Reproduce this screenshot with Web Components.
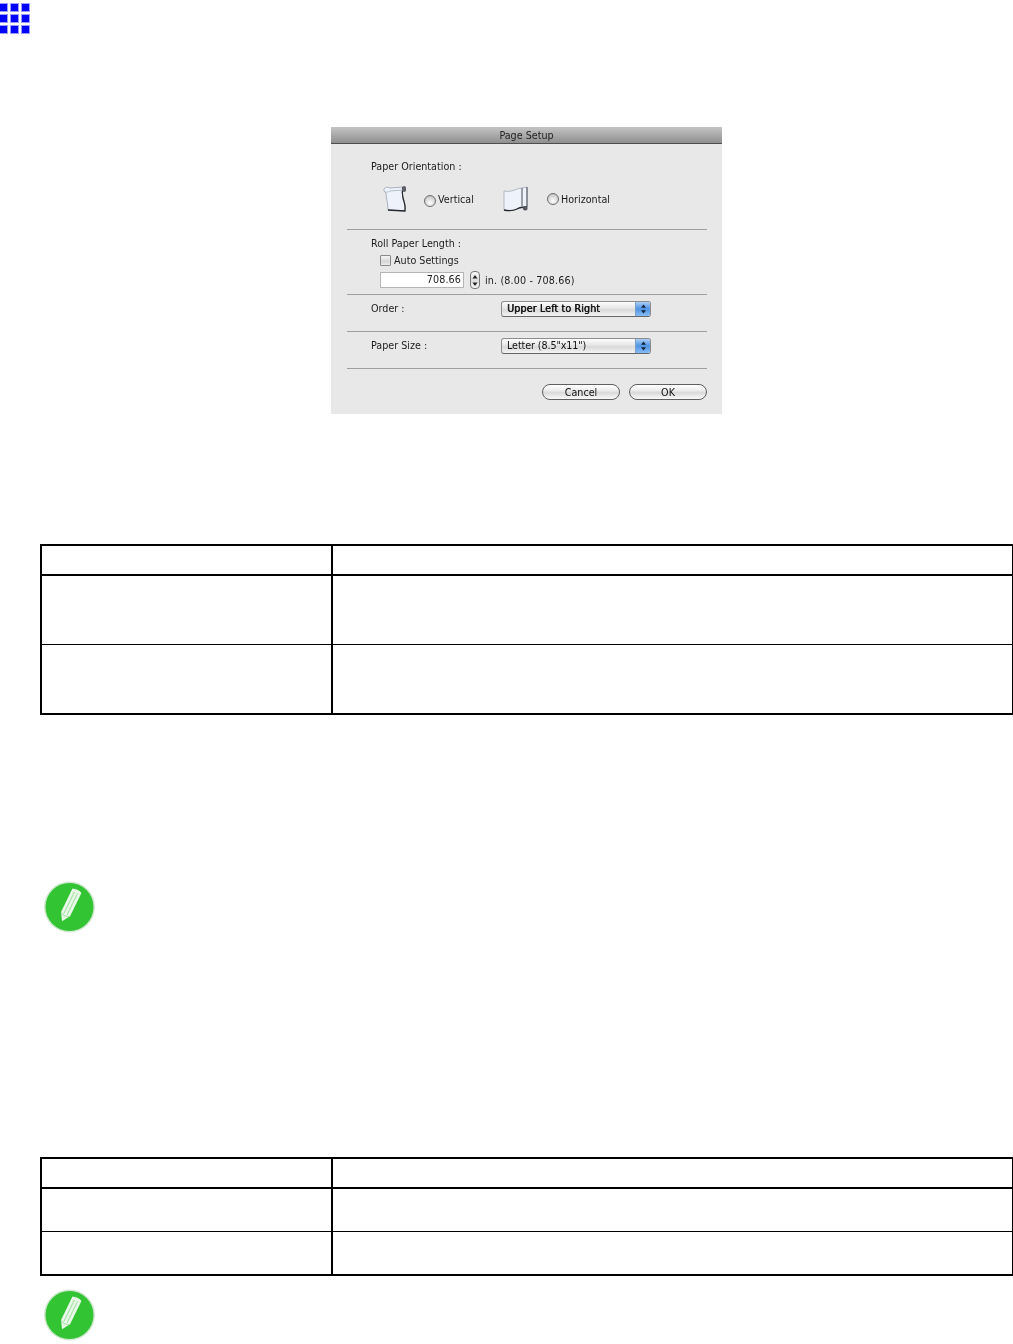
<!DOCTYPE html>
<html>
<head>
<meta charset="utf-8">
<title>Page Setup</title>
<style>
html, body { margin: 0; padding: 0; background: #fff; }
</style>
</head>
<body>
<manual-page>
  <grid-mark></grid-mark>
  <figure-box>
    <page-setup-dialog></page-setup-dialog>
  </figure-box>
  <spec-table rows="69,69" style="margin-top:130px"></spec-table>
  <note-mark style="margin-top:162px"></note-mark>
  <spec-table rows="43,43" style="margin-top:220px"></spec-table>
  <note-mark style="margin-top:9px"></note-mark>
</manual-page>

<script>
function define(name, html, setup) {
  customElements.define(name, class extends HTMLElement {
    constructor() {
      super();
      this.attachShadow({ mode: 'open' });
      this.shadowRoot.innerHTML = html;
    }
    connectedCallback() {
      if (setup) setup(this);
    }
  });
}

define('manual-page', `
<style>
:host { display: block; width: 1013px; height: 1344px; overflow: hidden; font-family: "Liberation Sans", sans-serif; }
</style>
<slot></slot>
`);

define('grid-mark', `
<style>
:host { display: grid; grid-template-columns: repeat(3, 9px); grid-auto-rows: 9px; gap: 2px; width: 31px; height: 31px; padding-top: 3px; margin: 0 0 -1px -1px; }
i { background: #0000ff; border: 1px solid #9a9aff; box-sizing: border-box; }
</style>
<i></i><i></i><i></i><i></i><i></i><i></i><i></i><i></i><i></i>
`);

define('figure-box', `
<style>
:host { display: flex; justify-content: center; padding-left: 40px; margin-top: 94px; }
</style>
<slot></slot>
`);

define('spec-table', `
<style>
:host { display: block; margin-left: 40px; width: 973px; box-sizing: border-box; border: solid #000; border-width: 2px 1px 2px 2px; }
.row { display: grid; grid-template-columns: 291px 1fr; }
.row + .row { border-top: 1px solid #000; }
.row.head { border-bottom: 2px solid #000; height: 28px; }
.row.head + .row { border-top: 0; }
.row > div:first-child { border-right: 2px solid #000; }
</style>
<div id="body"></div>
`, el => {
  const body = el.shadowRoot.getElementById('body');
  body.innerHTML = '<div class="row head"><div></div><div></div></div>';
  el.getAttribute('rows').split(',').forEach(h => {
    body.insertAdjacentHTML('beforeend', `<div class="row" style="height:${h - 1}px"><div></div><div></div></div>`);
  });
});

define('note-mark', `
<style>
:host { display: block; width: 60px; height: 60px; margin-left: 40px; }
svg { display: block; }
</style>
<svg width="60" height="60" viewBox="0 0 60 60">
  <defs>
    <filter id="soft" x="-20%" y="-20%" width="140%" height="140%"><feGaussianBlur stdDeviation="0.7"/></filter>
  </defs>
  <g filter="url(#soft)">
    <circle cx="29.5" cy="30" r="25.5" fill="#cfe8cf"/>
    <circle cx="29.5" cy="30" r="24" fill="#31c431"/>
    <g transform="rotate(26 29.5 29)">
      <path d="M24.5 12 Q29.5 10 34.5 12 L34.5 38 L29.5 46 L24.5 38 Z" fill="#eaf8ea"/>
      <path d="M27.8 14 V38 M31.2 14 V38" stroke="#a6e3a6" stroke-width="1.1"/>
      <path d="M25 38.5 Q29.5 41.5 34 38.5" stroke="#a6e3a6" stroke-width="1" fill="none"/>
    </g>
  </g>
</svg>
`);

define('mac-radio', `
<style>
:host { display: flex; align-items: center; }
i { width: 10px; height: 10px; border-radius: 50%; border: 1px solid #6d6d6d; background: radial-gradient(circle at 50% 70%, #fff, #d8d8d8 55%, #b4b4b4); margin-top: var(--drop, 0); }
span { margin-left: 2px; }
</style>
<i></i><span><slot></slot></span>
`);

define('mac-checkbox', `
<style>
:host { display: flex; align-items: center; }
i { width: 9px; height: 9px; border: 1px solid #8a8a8a; border-radius: 1px; background: linear-gradient(#f6f6f6, #d6d6d6 60%, #ececec); }
span { margin-left: 3px; }
</style>
<i></i><span><slot></slot></span>
`);

define('mac-select', `
<style>
:host { display: flex; width: 150px; height: 16px; box-sizing: border-box; border: 1px solid #8d8d8d; border-bottom-color: #666; border-radius: 3px; overflow: hidden; background: linear-gradient(#fdfdfd, #e6e6e6 45%, #d9d9d9 55%, #f4f4f4); }
span { flex: 1; padding-left: 5px; line-height: 14px; color: #111; letter-spacing: -0.1px; }
b { width: 14px; position: relative; background: linear-gradient(#a9cdf5, #4f94e4 50%, #88bdf4); border-left: 1px solid #7d9fc6; }
svg { display: block; margin: 2px auto 0; }
</style>
<span><slot></slot></span>
<b><svg width="7" height="10" viewBox="0 0 7 10"><path d="M3.5 0.5 L6 3.8 H1 Z M1 6.2 H6 L3.5 9.5 Z" fill="#12233c"/></svg></b>
`);

define('mac-button', `
<style>
:host { display: block; width: 78px; height: 16px; box-sizing: border-box; border: 1px solid #5f5f5f; border-radius: 8px; text-align: center; line-height: 15px; color: #111; background: linear-gradient(#fff, #ececec 40%, #d9d9d9 55%, #fafafa); }
</style>
<slot></slot>
`);

define('page-setup-dialog', `
<style>
:host { display: block; width: 391px; height: 287px; background: #e8e8e8; font: 9.6px "DejaVu Sans", sans-serif; color: #1c1c1c; filter: blur(0.35px); box-sizing: border-box; }
.title { height: 17px; line-height: 18px; text-align: center; color: #222; background: linear-gradient(#c4c4c4, #8f8f8f); border-bottom: 1px solid #4e4e4e; box-sizing: border-box; }
.body { padding: 0 15px 0 16px; }
hr { border: 0; height: 1px; background: #9f9f9f; margin: 0; }
.row { display: flex; align-items: center; padding-left: 24px; }
.first { padding-top: 14px; height: 16px; }
.orient { margin-top: 12px; height: 26px; }
.orient svg { display: block; flex: none; }
.vertical { --drop: 4px; width: 79px; margin-left: 17px; flex: none; }
.horizontal { margin-left: 19px; }
.roll { height: 14px; margin-top: 6px; }
.auto { height: 14px; margin-top: 3px; padding-left: 33px; }
.len { height: 18px; margin-top: 4px; padding-left: 33px; }
.field { width: 84px; height: 16px; box-sizing: border-box; border: 1px solid #b5b5b5; background: #fff; text-align: right; padding-right: 2px; line-height: 14px; color: #222; flex: none; letter-spacing: 0.1px; }
.step { width: 10px; height: 18px; box-sizing: border-box; margin-left: 6px; border: 1px solid #777; border-radius: 4px; background: linear-gradient(#fafafa, #ddd 50%, #f3f3f3); flex: none; }
.step svg { display: block; margin: 2px auto 0; }
.unit { margin-left: 5px; letter-spacing: 0.15px; }
.pick { height: 16px; margin-top: 6px; }
.pick label { width: 130px; flex: none; margin-bottom: 2px; }
.buttons { display: flex; justify-content: flex-end; gap: 9px; margin-top: 15px; }
strong { font-weight: 400; letter-spacing: 0.1px; text-shadow: 0.4px 0 0 currentColor; }
</style>
<div class="title">Page Setup</div>
<div class="body">
  <div class="row first">Paper Orientation :</div>
  <div class="row orient">
    <svg style="margin-left:12px" width="24" height="26" viewBox="0 0 24 26">
      <path d="M1 5 C0 2 4 0 7 2 L20 1 C19 5 19 8 20 12 C21 16 23 19 22 25 L5 24 C5 18 3 11 3 7 Z" fill="#eef3fb" stroke="#8d97a6" stroke-width=".7"/>
      <path d="M20 1 C19 5 19 8 20 12 C21 16 23 19 22 25 L5 24" fill="none" stroke="#26282c" stroke-width="1.3"/>
      <path d="M1 5 C3 7 5 6 7 5 L20 4" fill="none" stroke="#aab4c2" stroke-width=".9"/>
      <rect x="19.5" y="0" width="3.5" height="6" rx="1.7" fill="#5f6068"/>
    </svg>
    <mac-radio class="vertical">Vertical</mac-radio>
    <svg width="25" height="26" viewBox="0 0 25 26">
      <path d="M1 5 C6 6 10 5 14 3 C17 2 20 2 24 1 L24 21 C20 21 17 21 14 23 C10 25 5 25 1 24 Z" fill="#eef3fb" stroke="#9aa4b2" stroke-width=".7"/>
      <path d="M1 24 C5 25 10 25 14 23 C17 21 20 21 24 21" fill="none" stroke="#26282c" stroke-width="1.3"/>
      <path d="M19 2 L19 20 M24 1 L24 21" fill="none" stroke="#4a4d55" stroke-width="1"/>
      <rect x="20" y="20" width="4.5" height="4.5" rx="1.8" fill="#55565e"/>
    </svg>
    <mac-radio class="horizontal">Horizontal</mac-radio>
  </div>
  <hr style="margin-top:17px">
  <div class="row roll">Roll Paper Length :</div>
  <div class="row auto"><mac-checkbox>Auto Settings</mac-checkbox></div>
  <div class="row len">
    <div class="field">708.66</div>
    <div class="step"><svg width="6" height="13" viewBox="0 0 6 13"><path d="M3 1 L5.5 4.5 H.5 Z M.5 8.5 H5.5 L3 12 Z" fill="#222"/></svg></div>
    <span class="unit">in. (8.00 - 708.66)</span>
  </div>
  <hr style="margin-top:5px">
  <div class="row pick"><label>Order :</label><mac-select><strong>Upper Left to Right</strong></mac-select></div>
  <hr style="margin-top:14px">
  <div class="row pick"><label>Paper Size :</label><mac-select>Letter (8.5"x11")</mac-select></div>
  <hr style="margin-top:14px">
  <div class="buttons"><mac-button>Cancel</mac-button><mac-button>OK</mac-button></div>
</div>
`);
</script>
</body>
</html>
